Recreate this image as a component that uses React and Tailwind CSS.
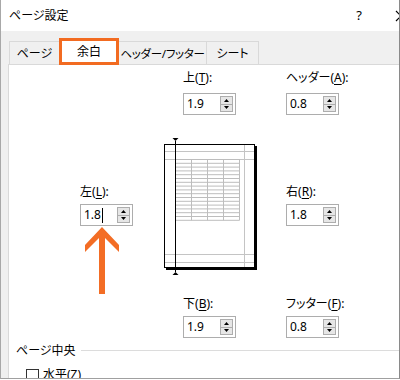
import React from 'react';

function SpinBox({ value, cursor }) {
  return (
    <div className="flex h-[22px] w-[53px] items-center border border-[#adadad] bg-white">
      <span className="flex flex-1 items-center pl-[3px] text-[12px] leading-[14px] text-black">
        {value}
        {cursor && <span className="ml-[1px] inline-block h-[15px] w-px bg-black" />}
      </span>
      <div className="mr-[2px] flex h-[16px] w-[13px] flex-col border border-[#adadad] bg-[#e6e6e6]">
        <div className="flex flex-1 items-center justify-center border-b border-[#adadad]">
          <svg width="5" height="3" viewBox="0 0 5 3">
            <polygon points="2.5,0 5,3 0,3" fill="#000" />
          </svg>
        </div>
        <div className="flex flex-1 items-center justify-center">
          <svg width="5" height="3" viewBox="0 0 5 3">
            <polygon points="0,0 5,0 2.5,3" fill="#000" />
          </svg>
        </div>
      </div>
    </div>
  );
}

function Field({ label, k, value, gap, cursor }) {
  return (
    <div className="flex flex-col">
      <div className="whitespace-nowrap text-[12px] leading-[16px] text-black" style={{ marginBottom: gap }}>
        {label}(<span className="underline underline-offset-2">{k}</span>):
      </div>
      <SpinBox value={value} cursor={cursor} />
    </div>
  );
}

function Preview() {
  const rows = [];
  for (let i = 0; i <= 16; i++) {
    const y = 23.5 + i * 3.8;
    rows.push(<line key={i} x1="17.5" y1={y} x2="81.5" y2={y} stroke="#bdbdbd" />);
  }
  return (
    <svg width="104" height="142" viewBox="0 0 104 142">
      <rect x="6.5" y="8.5" width="90" height="123" fill="#fff" stroke="#000" />
      <rect x="97" y="10" width="2" height="124" fill="#000" />
      <rect x="8" y="132" width="91" height="2" fill="#000" />
      {[15.5, 23.5, 118.5, 126.5].map((y) => (
        <line key={y} x1="7" y1={y} x2="96" y2={y} stroke="#c4c4c4" />
      ))}
      <line x1="86.5" y1="9" x2="86.5" y2="131" stroke="#c4c4c4" />
      {rows}
      {[33.5, 49.5, 65.5, 81.5].map((x) => (
        <line key={x} x1={x} y1="23" x2={x} y2="84.3" stroke="#bdbdbd" />
      ))}
      <line x1="17.5" y1="5" x2="17.5" y2="136" stroke="#000" />
      <polygon points="14.5,2 20.5,2 17.5,5" fill="#000" />
      <polygon points="17.5,136 14.5,139 20.5,139" fill="#000" />
    </svg>
  );
}

function Arrow() {
  return (
    <svg width="34" height="67" viewBox="0 0 34 67">
      <polygon points="17,0 34,18 34,25 17,8 0,25 0,18" fill="#f36d25" />
      <rect x="14" y="5" width="6" height="62" fill="#f36d25" />
    </svg>
  );
}

export default function App() {
  return (
    <div className="h-[380px] w-[400px] overflow-hidden bg-white font-['Noto_Sans','Noto_Sans_CJK_JP',sans-serif] [font-feature-settings:'palt']">
      <div className="flex h-[379px] flex-col overflow-hidden border-x border-b border-l-[#a8a8a8] border-r-[#8a8a8a] border-b-[#a0a0a0]">
        {/* title bar */}
        <div className="flex h-[31px] shrink-0 items-center bg-white pl-[8px]">
          <span className="text-[12px] text-black">ページ設定</span>
          <span className="ml-auto mr-[33px] text-[13px] text-black">?</span>
          <svg className="-mr-[8px] shrink-0" width="12" height="12" viewBox="0 0 12 12">
            <path d="M1 1 L11 11 M11 1 L1 11" stroke="#000" strokeWidth="1.2" />
          </svg>
        </div>

        <div className="flex flex-1 flex-col bg-[#f0f0f0] pl-[7px]">
          {/* tabs */}
          <div className="flex h-[33px] shrink-0 items-end pl-[1px] text-[12px] text-black">
            <div className="flex h-[23px] w-[51px] items-center justify-center whitespace-nowrap border border-b-0 border-[#d9d9d9] pt-[1px]">
              ページ
            </div>
            <div className="relative z-10 -mb-[1px] -ml-px flex h-[27px] w-[60px] items-center justify-center whitespace-nowrap border-[3px] border-[#f26b21] bg-white">
              余白
            </div>
            <div className="flex h-[23px] w-[88px] items-center justify-center whitespace-nowrap border border-b-0 border-l-0 border-[#d9d9d9] pt-[1px] text-[11.5px] tracking-[-0.3px]">
              ヘッダー/フッター
            </div>
            <div className="flex h-[23px] w-[52px] items-center justify-center whitespace-nowrap border border-b-0 border-l-0 border-[#d9d9d9] pt-[1px]">
              シート
            </div>
          </div>

          {/* panel */}
          <div className="flex flex-1 flex-col border-l border-t border-[#d9d9d9] bg-white">
            <div className="mt-[5px] flex pl-[174px]">
              <Field label="上" k="T" value="1.9" gap={7} />
              <div className="ml-[50px]">
                <Field label="ヘッダー" k="A" value="0.8" gap={7} />
              </div>
            </div>

            <div className="mt-[21px] flex h-[142px] items-start pl-[71px]">
              <div className="mt-[48px] flex flex-col">
                <Field label="左" k="L" value="1.8" gap={4} cursor />
                <div className="ml-[5px] mt-[1px]">
                  <Arrow />
                </div>
              </div>
              <div className="ml-[25px]">
                <Preview />
              </div>
              <div className="ml-[24px] mt-[48px]">
                <Field label="右" k="R" value="1.8" gap={4} />
              </div>
            </div>

            <div className="mt-[18px] flex pl-[174px]">
              <Field label="下" k="B" value="1.9" gap={4} />
              <div className="ml-[50px]">
                <Field label="フッター" k="F" value="0.8" gap={4} />
              </div>
            </div>

            <div className="mt-[5px] flex items-center pl-[7px]">
              <span className="text-[12px] leading-[16px] text-black">ページ中央</span>
              <div className="ml-[5px] mt-[-2px] flex-1 border-t border-[#dcdcdc]" />
            </div>

            <div className="mt-[8px] flex items-center pl-[17px]">
              <div className="h-[13px] w-[13px] border border-[#333] bg-white" />
              <span className="ml-[4px] text-[12px] leading-[16px] text-black">水平(Z)</span>
            </div>
          </div>
        </div>
      </div>
    </div>
  );
}
